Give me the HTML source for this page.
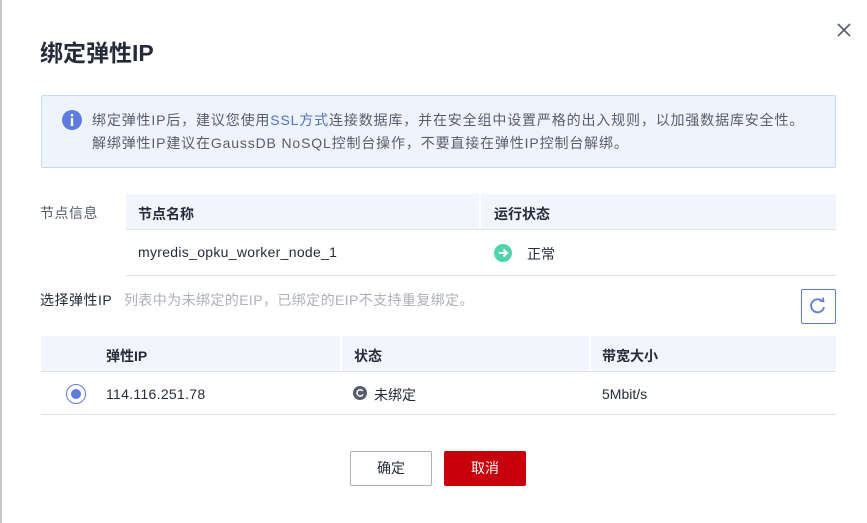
<!DOCTYPE html>
<html><head><meta charset="utf-8"><style>
*{margin:0;padding:0;box-sizing:border-box}
body{width:867px;height:523px;background:#fff;font-family:"Liberation Sans","Noto Sans CJK SC",sans-serif;font-size:14px;color:#252b3a;position:relative;overflow:hidden}
.a{position:absolute}
.lb{position:absolute;left:0;top:0;width:2px;height:523px;background:#c8c8c8}
.hd{background:#f2f5fc;font-weight:bold;color:#252b3a}
.line{border-bottom:1px solid #dfe1e6}
</style></head><body>
<div class="lb"></div>
<div class="a" style="left:40px;top:34px;font-size:23px;font-weight:bold;">绑定弹性IP</div>
<svg class="a" style="left:837px;top:23px" width="14" height="14"><path d="M1 1L13 13M13 1L1 13" stroke="#575d6c" stroke-width="1.6"/></svg>
<div class="a" style="left:41px;top:95px;width:795px;height:73px;background:#edf4fe;border:1px solid #c6d9f7;border-radius:2px"></div>
<svg class="a" style="left:62px;top:110px" width="20" height="20"><circle cx="10" cy="10" r="10" fill="#5e7ce0"/><rect x="8.8" y="8" width="2.4" height="8" fill="#fff"/><circle cx="10" cy="5.2" r="1.4" fill="#fff"/></svg>
<div class="a" style="left:92px;top:109px;color:#575d6c;line-height:23px;letter-spacing:0.85px">绑定弹性IP后，建议您使用<span style="color:#526ecc">SSL方式</span>连接数据库，并在安全组中设置严格的出入规则，以加强数据库安全性。<br>解绑弹性IP建议在GaussDB NoSQL控制台操作，不要直接在弹性IP控制台解绑。</div>
<div class="a" style="left:40px;top:203px;color:#575d6c;letter-spacing:0.5px">节点信息</div>
<div class="a hd" style="left:126px;top:194px;width:710px;height:36px;border-bottom:1px solid #dfe1e6"></div>
<div class="a" style="left:479px;top:194px;width:2px;height:35px;background:#fff"></div>
<div class="a" style="left:138px;top:204px;font-weight:bold">节点名称</div>
<div class="a" style="left:494px;top:204px;font-weight:bold">运行状态</div>
<div class="a line" style="left:126px;top:230px;width:710px;height:46px"></div>
<div class="a" style="left:138px;top:244px;letter-spacing:0.3px">myredis_opku_worker_node_1</div>
<svg class="a" style="left:494px;top:244px" width="18" height="18"><circle cx="9" cy="9" r="9" fill="#50d4ab"/><path d="M5 9H13M9.5 5.5L13 9L9.5 12.5" stroke="#fff" stroke-width="2" fill="none"/></svg>
<div class="a" style="left:527px;top:244px">正常</div>
<div class="a" style="left:40px;top:290px;letter-spacing:0.5px">选择弹性IP</div>
<div class="a" style="left:124px;top:290px;color:#adb0b8;font-size:14px;letter-spacing:0.4px">列表中为未绑定的EIP，已绑定的EIP不支持重复绑定。</div>
<div class="a" style="left:801px;top:289px;width:35px;height:35px;border:1px solid #5e7ce0;border-radius:2px"></div>
<svg class="a" style="left:808px;top:296px" width="20" height="20"><path d="M14.5 5.5A6.5 6.5 0 1 0 16 11" stroke="#5e7ce0" stroke-width="1.8" fill="none"/><path d="M11.5 4.5L15.5 5.5L15 1.5" stroke="#5e7ce0" stroke-width="1.6" fill="none"/></svg>
<div class="a hd" style="left:41px;top:336px;width:795px;height:36px;border-bottom:1px solid #dfe1e6"></div>
<div class="a" style="left:340px;top:336px;width:2px;height:35px;background:#fff"></div>
<div class="a" style="left:589px;top:336px;width:2px;height:35px;background:#fff"></div>
<div class="a" style="left:106px;top:346px;font-weight:bold">弹性IP</div>
<div class="a" style="left:354px;top:346px;font-weight:bold">状态</div>
<div class="a" style="left:602px;top:346px;font-weight:bold">带宽大小</div>
<div class="a line" style="left:41px;top:372px;width:795px;height:43px"></div>
<div class="a" style="left:66px;top:384px;width:20px;height:20px;border:1px solid #5e7ce0;border-radius:50%"></div>
<div class="a" style="left:71px;top:389px;width:10px;height:10px;background:#5e7ce0;border-radius:50%"></div>
<div class="a" style="left:106px;top:386px;letter-spacing:0.3px">114.116.251.78</div>
<svg class="a" style="left:353px;top:386px" width="14" height="14"><circle cx="7" cy="7" r="7" fill="#575d6c"/><path d="M9.8 5A3.2 3.2 0 1 0 10 8.5" stroke="#fff" stroke-width="1.5" fill="none"/></svg>
<div class="a" style="left:374px;top:385px">未绑定</div>
<div class="a" style="left:602px;top:386px">5Mbit/s</div>
<div class="a" style="left:350px;top:451px;width:82px;height:35px;border:1px solid #adb0b8;border-radius:2px;text-align:center;line-height:33px">确定</div>
<div class="a" style="left:444px;top:451px;width:82px;height:35px;background:#c7000b;border-radius:2px;text-align:center;line-height:35px;color:#fff">取消</div>
</body></html>
